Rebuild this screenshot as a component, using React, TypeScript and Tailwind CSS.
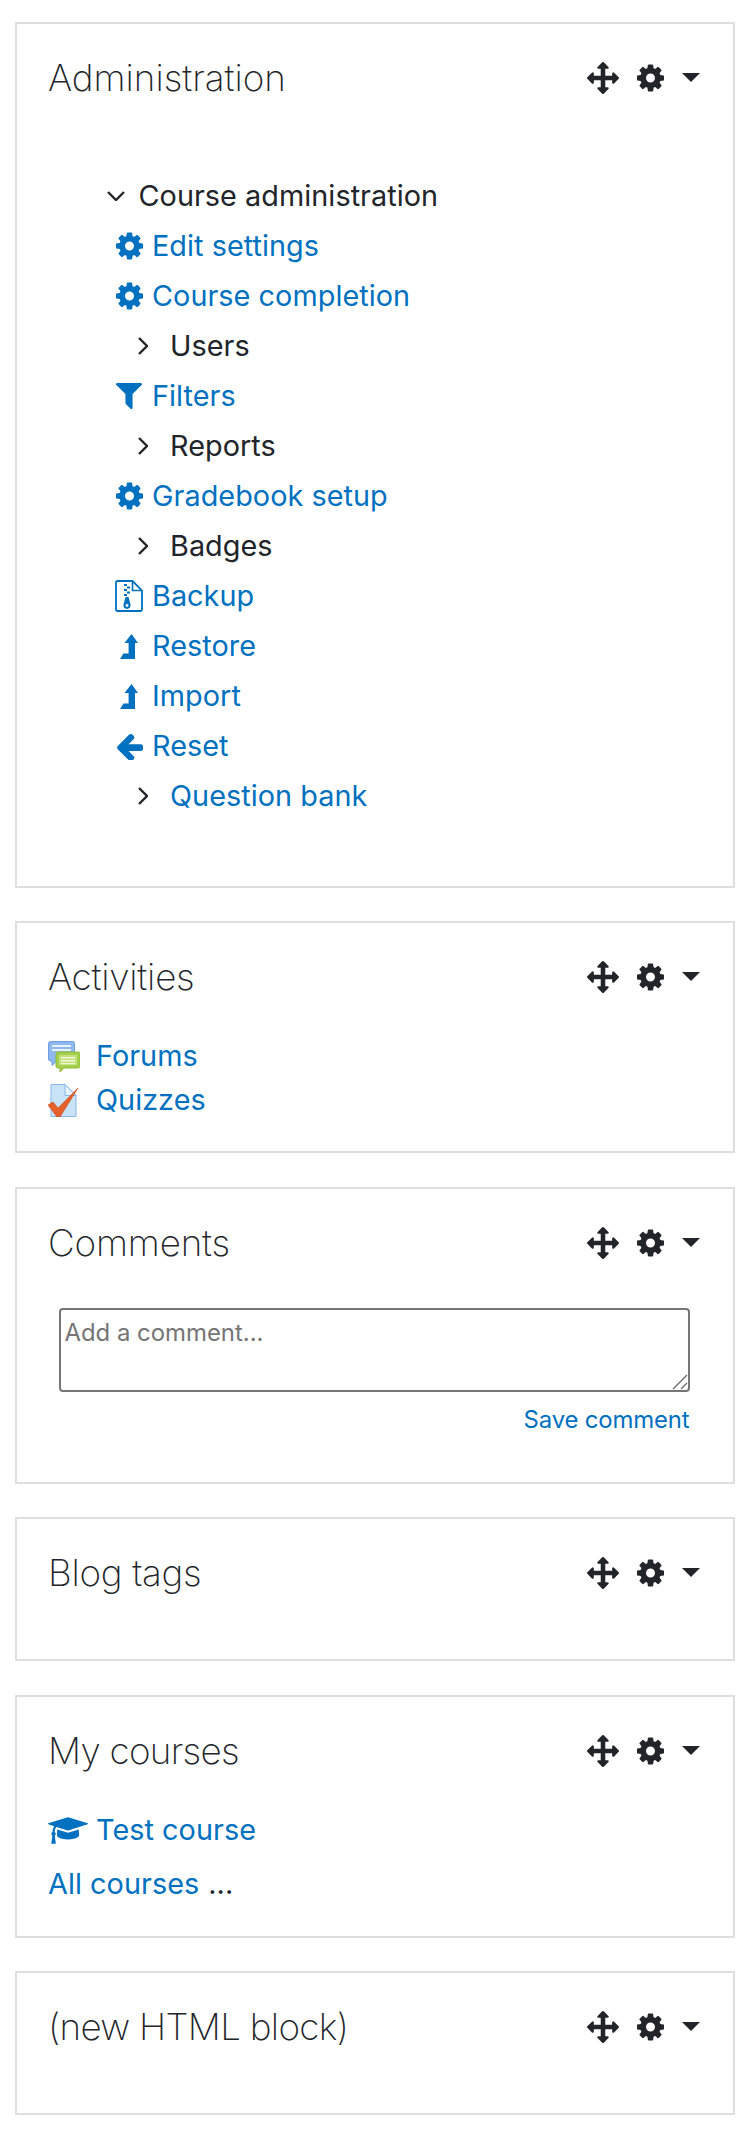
import React from 'react';

const linkCls = 'text-[#0070c0]';

// Moodle still ships Font Awesome 4, these are its glyph shapes
const COG = 'M1152 896q0-106-75-181t-181-75-181 75-75 181 75 181 181 75 181-75 75-181zm512-109v222q0 12-8 23t-20 13l-185 28q-19 54-39 91 35 50 107 138 10 12 10 25t-9 23q-27 37-99 108t-94 71q-12 0-26-9l-138-108q-44 23-91 38-16 136-29 186-7 28-36 28h-222q-14 0-24.5-8.5t-11.5-21.5l-28-184q-49-16-90-37l-141 107q-10 9-25 9-14 0-25-11-126-114-165-168-7-10-7-23 0-12 8-23 15-21 51-66.5t54-70.5q-27-50-41-99l-183-27q-13-2-21-12.5t-8-23.5v-222q0-12 8-23t19-13l186-28q14-46 39-92-40-57-107-138-10-12-10-24 0-10 9-23 26-36 98.5-107.5t94.5-71.5q13 0 26 10l138 107q44-23 91-38 16-136 29-186 7-28 36-28h222q14 0 24.5 8.5t11.5 21.5l28 184q49 16 90 37l142-107q9-9 24-9 13 0 25 10 129 119 165 170 7 8 7 22 0 12-8 23-15 21-51 66.5t-54 70.5q26 50 41 98l183 28q13 2 21 12.5t8 23.5z';
const ARROWS = 'M1792 896q0 26-19 45l-256 256q-19 19-45 19t-45-19-19-45v-128h-384v384h128q26 0 45 19t19 45-19 45l-256 256q-19 19-45 19t-45-19l-256-256q-19-19-19-45t19-45 45-19h128v-384h-384v128q0 26-19 45t-45 19-45-19l-256-256q-19-19-19-45t19-45l256-256q19-19 45-19t45 19 19 45v128h384v-384h-128q-26 0-45-19t-19-45 19-45l256-256q19-19 45-19t45 19l256 256q19 19 19 45t-19 45-45 19h-128v384h384v-128q0-26 19-45t45-19 45 19l256 256q19 19 19 45z';
const ARROW_LEFT = 'M1664 896v128q0 53-32.5 90.5t-84.5 37.5h-704l293 294q38 36 38 90t-38 90l-75 76q-38 38-90 38-53 0-91-38l-651-652q-37-37-37-90 0-52 37-91l651-650q38-38 91-38 52 0 90 38l75 74q38 38 38 91t-38 91l-293 293h704q52 0 84.5 37.5t32.5 90.5z';
const FILTER = 'M1595 295q17 41-14 70l-493 493v742q0 42-39 59-13 5-25 5-27 0-45-19l-256-256q-19-19-19-45v-486l-493-493q-31-29-14-70 17-39 59-39h1280q42 0 59 39z';
const CAP = 'M1774 836l18 316q4 69-82 128t-235 93.5-323 34.5-323-34.5-235-93.5-82-128l18-316 574 181q22 7 48 7t48-7zm530-324q0 23-22 31l-1120 352q-4 1-10 1t-10-1l-652-206q-43 34-71 111.5t-34 178.5q63 36 63 109 0 69-58 107l58 433q2 14-8 25-9 11-24 11h-192q-15 0-24-11-10-11-8-25l58-433q-58-38-58-107 0-73 65-111 11-207 98-330l-333-104q-22-8-22-31t22-31l1120-352q4-1 10-1t10 1l1120 352q22 8 22 31z';

function Cog({ className }: { className: string }) {
  return (
    <svg viewBox="128 128 1536 1536" className={className}>
      <path d={COG} />
    </svg>
  );
}

function Caret() {
  return (
    <svg viewBox="0 0 18 9" className="w-[18px] h-[9px] fill-[#212529]">
      <polygon points="0,0 18,0 9,9" />
    </svg>
  );
}

function ChevronRight() {
  return (
    <svg viewBox="0 0 10 18" className="w-[10px] h-[18px] fill-none stroke-[#212529] stroke-[2.4]">
      <polyline points="1,1 9,9 1,17" />
    </svg>
  );
}

function LevelUp() {
  return (
    <svg viewBox="0 0 18 25" className="w-[18px] h-[25px] fill-[#0070c0]">
      <polygon points="0,25 3.5,19.5 8.6,19.5 8.6,9 4.5,9 11.5,0 18,9 15,9 15,25" />
    </svg>
  );
}

function ZipFile() {
  return (
    <svg viewBox="0 0 28 32" className="w-[28px] h-[32px]">
      <path d="M2.5 1h15L27 10.5V29.5a1.5 1.5 0 0 1-1.5 1.5h-23A1.5 1.5 0 0 1 1 29.5v-27A1.5 1.5 0 0 1 2.5 1z" fill="none" stroke="#0070c0" strokeWidth="1.8" />
      <path d="M17.5 1.5v9h9" fill="none" stroke="#0070c0" strokeWidth="1.6" />
      <path d="M9 4h3v2H9zM12 6.5h3v2h-3zM9 9h3v2H9zM12 11.5h3v2h-3zM9 14h3v2H9z" fill="#0070c0" />
      <path d="M10.5 17h3l2 7.5a3.6 3.6 0 1 1-7 0z" fill="#0070c0" />
      <circle cx="12" cy="25.5" r="1.4" fill="#fff" />
    </svg>
  );
}

function ForumIcon() {
  return (
    <svg viewBox="0 0 32 31" className="w-[32px] h-[31px]">
      <path d="M2.5 0.5h22a2 2 0 0 1 2 2V18a2 2 0 0 1-2 2H9l-5 4.5V20H2.5a2 2 0 0 1-2-2V2.5a2 2 0 0 1 2-2z" fill="#8fb8ee" stroke="#6d9de0" />
      <rect x="4" y="4" width="19" height="2" fill="#e8f1fc" />
      <rect x="4" y="8" width="19" height="2" fill="#e8f1fc" />
      <path d="M10 11h20a2 2 0 0 1 2 2v12a2 2 0 0 1-2 2H16l-4 4v-4h-2a2 2 0 0 1-2-2V13a2 2 0 0 1 2-2z" fill="#a5cf4c" stroke="#8fbb38" />
      <rect x="11" y="14" width="18" height="10" fill="#c3e27a" />
      <rect x="13" y="16" width="14" height="1.5" fill="#f0f8d8" />
      <rect x="13" y="19" width="14" height="1.5" fill="#f0f8d8" />
      <rect x="13" y="22" width="14" height="1.2" fill="#f0f8d8" />
    </svg>
  );
}

function QuizIcon() {
  return (
    <svg viewBox="0 0 31 33" className="w-[31px] h-[33px]">
      <path d="M3 0.5h14l11 11V32.5H3z" fill="#c8e2f7" stroke="#8ab6ea" />
      <path d="M17 0.5v11h11z" fill="#e6f2fc" stroke="#8ab6ea" />
      <path d="M0 21l5-3 5 6L30 4 12 33h-3z" fill="#e5602a" stroke="#c94c1c" strokeWidth="0.6" />
    </svg>
  );
}

function Block({ title, titleCls, className, children }: { title: string; titleCls: string; className: string; children?: React.ReactNode }) {
  return (
    <section className={`ml-[15px] w-[720px] border-2 border-[#dfdfdf] ${className}`}>
      <div className="mt-[31px] h-[46px] pl-[31px] flex items-center justify-between">
        <h5 className={`text-[36.8px] font-extralight text-[#212529] leading-none ${titleCls}`}>{title}</h5>
        <div className="flex items-center mr-[33px] fill-[#212529]">
          <svg viewBox="0 0 1792 1792" className="w-[32px] h-[32px]">
            <path d={ARROWS} />
          </svg>
          <Cog className="w-[27px] h-[28px] ml-[18px]" />
          <span className="ml-[18px] mb-[1px]"><Caret /></span>
        </div>
      </div>
      {children}
    </section>
  );
}

function NavRow({ icon, label }: { icon: React.ReactNode; label: string }) {
  return (
    <div className="h-[50px] flex items-center pl-[98px]">
      <span className="w-[28px] flex justify-center shrink-0">{icon}</span>
      <a className={`ml-[9px] ${linkCls}`}>{label}</a>
    </div>
  );
}

function NavGroup({ label, link }: { label: string; link?: boolean }) {
  return (
    <div className="h-[50px] flex items-center pl-[121px]">
      <ChevronRight />
      <span className={`ml-[22px] ${link ? linkCls : ''}`}>{label}</span>
    </div>
  );
}

export default function App() {
  const gear = <Cog className="w-[27px] h-[28px] fill-[#0070c0]" />;

  return (
    <div className="w-[756px] h-[2130px] bg-white pt-[22px] text-[28.8px] text-[#212529] font-['Inter',sans-serif] tracking-[0.05px]">
      <Block title="Administration" titleCls="tracking-[0px]" className="h-[866px]">
        <div className="mt-[70px]">
          <div className="h-[50px] flex items-center pl-[90px]">
            <svg viewBox="0 0 18 10" className="w-[18px] h-[10px] fill-none stroke-[#212529] stroke-[2.4]">
              <polyline points="1,1 9,9 17,1" />
            </svg>
            <span className="ml-[13.5px]">Course administration</span>
          </div>
          <NavRow icon={gear} label="Edit settings" />
          <NavRow icon={gear} label="Course completion" />
          <NavGroup label="Users" />
          <NavRow
            icon={
              <svg viewBox="192 256 1408 1408" className="w-[26px] h-[26px] fill-[#0070c0]">
                <path d={FILTER} />
              </svg>
            }
            label="Filters"
          />
          <NavGroup label="Reports" />
          <NavRow icon={gear} label="Gradebook setup" />
          <NavGroup label="Badges" />
          <NavRow icon={<ZipFile />} label="Backup" />
          <NavRow icon={<LevelUp />} label="Restore" />
          <NavRow icon={<LevelUp />} label="Import" />
          <NavRow
            icon={
              <svg viewBox="128 128 1536 1536" className="w-[27px] h-[27px] fill-[#0070c0]">
                <path d={ARROW_LEFT} />
              </svg>
            }
            label="Reset"
          />
          <NavGroup label="Question bank" link />
        </div>
      </Block>

      <Block title="Activities" titleCls="tracking-[-0.2px]" className="h-[232px] mt-[33px]">
        <div className="mt-[34px] pl-[31px]">
          <div className="h-[44px] flex items-center">
            <span className="w-[48px] shrink-0"><ForumIcon /></span>
            <a className={linkCls}>Forums</a>
          </div>
          <div className="h-[44px] flex items-center">
            <span className="w-[48px] shrink-0"><QuizIcon /></span>
            <a className={linkCls}>Quizzes</a>
          </div>
        </div>
      </Block>

      <Block title="Comments" titleCls="tracking-[-0.15px]" className="h-[297px] mt-[34px]">
        <div className="mt-[42px] ml-[41.5px] w-[631px]">
          <div className="relative h-[84px]">
            <textarea
              placeholder="Add a comment..."
              className="block w-full h-full resize-none border-2 border-[#767676] rounded-[4px] px-[4px] pt-[7px] text-[23.9px] leading-[31px] tracking-[0px] placeholder:text-[#757575] outline-none"
            />
            <svg viewBox="0 0 16 16" className="absolute right-[2px] bottom-[2px] w-[16px] h-[16px] stroke-[#666] stroke-[1.2]">
              <line x1="1" y1="15" x2="15" y2="1" />
              <line x1="9" y1="15" x2="15" y2="9" />
            </svg>
          </div>
          <div className={`mt-[14px] text-right text-[23.9px] leading-[28px] tracking-[-0.15px] ${linkCls}`}>Save comment</div>
        </div>
      </Block>

      <Block title="Blog tags" titleCls="tracking-[-0.3px]" className="h-[144px] mt-[33px]" />

      <Block title="My courses" titleCls="tracking-[-0.7px]" className="h-[243px] mt-[34px]">
        <div className="mt-[34px] pl-[31px]">
          <div className="h-[44px] flex items-center">
            <svg viewBox="0 128 2304 1536" className="w-[40px] h-[27px] shrink-0 fill-[#0070c0]">
              <path d={CAP} />
            </svg>
            <a className={`ml-[8px] ${linkCls}`}>Test course</a>
          </div>
          <div className="h-[44px] mt-[10px] flex items-center">
            <a className={linkCls}>All courses</a>
            <span className="ml-[9px]">...</span>
          </div>
        </div>
      </Block>

      <Block title="(new HTML block)" titleCls="tracking-[-0.7px]" className="h-[144px] mt-[33px]" />
    </div>
  );
}
